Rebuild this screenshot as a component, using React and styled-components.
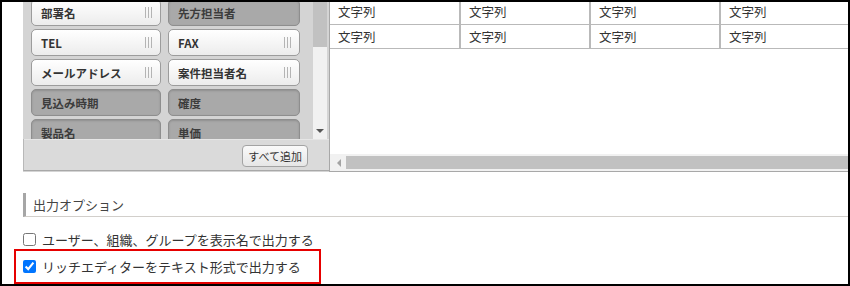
import React from 'react'
import styled, { createGlobalStyle, css } from 'styled-components'

const GlobalStyle = createGlobalStyle`
body {
  margin: 0;
  background: #fff;
  font-family: "Noto Sans CJK JP", "Noto Sans", sans-serif;
  color: #333;
}
`;

const fields = [
  { label: '部署名', on: true },
  { label: '先方担当者', on: false },
  { label: 'TEL', on: true },
  { label: 'FAX', on: true },
  { label: 'メールアドレス', on: true },
  { label: '案件担当者名', on: true },
  { label: '見込み時期', on: false },
  { label: '確度', on: false },
  { label: '製品名', on: false },
  { label: '単価', on: false },
];

const rows = [
  ['文字列', '文字列', '文字列', '文字列'],
  ['文字列', '文字列', '文字列', '文字列'],
];

export default function App() {
  return (
    <>
      <GlobalStyle />
      <Frame>
        <Top>
          <LeftPanel>
            <ListArea>
              <FieldGrid>
                {fields.map((f) => (
                  <Field key={f.label} $on={f.on}>
                    <span>{f.label}</span>
                    {f.on && <Grip />}
                  </Field>
                ))}
              </FieldGrid>
              <VScroll>
                <VThumb />
                <DownArrow />
              </VScroll>
            </ListArea>
            <Footer>
              <AddAll>すべて追加</AddAll>
            </Footer>
          </LeftPanel>
          <RightPanel>
            <TableWrap>
              <Table>
                <tbody>
                  {rows.map((r, i) => (
                    <tr key={i}>
                      {r.map((c, j) => (
                        <Cell key={j}>{c}</Cell>
                      ))}
                    </tr>
                  ))}
                </tbody>
              </Table>
            </TableWrap>
            <HScroll>
              <LeftArrow />
              <HThumb />
            </HScroll>
          </RightPanel>
        </Top>
        <SectionHead>出力オプション</SectionHead>
        <Option>
          <Check type="checkbox" />
          <span>ユーザー、組織、グループを表示名で出力する</span>
        </Option>
        <Highlight>
          <Option $inside>
            <Check type="checkbox" defaultChecked />
            <span>リッチエディターをテキスト形式で出力する</span>
          </Option>
        </Highlight>
      </Frame>
    </>
  )
}

const Frame = styled.div`
box-sizing: border-box;
width: 850px;
height: 286px;
border: 2px solid #000;
overflow: hidden;
`;

const Top = styled.div`
display: flex;
height: 170px;
padding-left: 21px;
`;

const LeftPanel = styled.div`
width: 306px;
display: flex;
flex-direction: column;
background: #d4d4d4;
`;

const ListArea = styled.div`
height: 137px;
display: flex;
overflow: hidden;
padding-left: 8px;
`;

const FieldGrid = styled.div`
display: grid;
grid-template-columns: 130px 132px;
grid-auto-rows: 27px;
column-gap: 7px;
row-gap: 3px;
margin-top: -3px;
`;

const Field = styled.div`
box-sizing: border-box;
display: flex;
align-items: center;
justify-content: space-between;
padding: 0 8px 0 9px;
border-radius: 5px;
font-size: 11.5px;
font-weight: bold;
${(p) => p.$on ? css`
  background: linear-gradient(#ffffff, #ececec);
  border: 1px solid #9c9c9c;
  color: #333;
` : css`
  background: #a9a9a9;
  border: 1px solid #8e8e8e;
  box-shadow: inset 0 1px 2px rgba(0, 0, 0, 0.15);
  color: #3c3c3c;
`}
`;

const Grip = styled.i`
width: 7px;
height: 11px;
background: repeating-linear-gradient(90deg, #b4b4b4 0 1px, transparent 1px 3px);
`;

const VScroll = styled.div`
width: 14px;
margin-left: 13px;
background: #f1f1f1;
display: flex;
flex-direction: column;
justify-content: space-between;
align-items: center;
padding-bottom: 6px;
`;

const VThumb = styled.div`
width: 14px;
height: 45px;
background: #c1c1c1;
`;

const DownArrow = styled.div`
width: 0;
height: 0;
border-left: 4px solid transparent;
border-right: 4px solid transparent;
border-top: 4px solid #555;
`;

const Footer = styled.div`
height: 32px;
box-sizing: border-box;
display: flex;
justify-content: flex-end;
align-items: flex-start;
padding: 6px 21px 0 0;
background: #dadada;
border-left: 1px solid #b8b8b8;
border-bottom: 1px solid #a8a8a8;
box-shadow: inset 0 1px 0 #e6e6e6;
`;

const AddAll = styled.div`
box-sizing: border-box;
height: 22px;
padding: 0 5px;
display: flex;
align-items: center;
font-size: 11px;
color: #333;
background: linear-gradient(#fafafa, #e6e6e6);
border: 1px solid #a3a3a3;
border-radius: 4px;
`;

const RightPanel = styled.div`
flex: 1;
display: flex;
flex-direction: column;
border-left: 1px solid #a8a8a8;
border-bottom: 1px solid #a8a8a8;
overflow: hidden;
`;

const TableWrap = styled.div`
flex: 1;
overflow: hidden;
`;

const Table = styled.table`
border-collapse: collapse;
margin-top: -2px;
`;

const Cell = styled.td`
box-sizing: border-box;
width: 130px;
min-width: 130px;
height: 24px;
padding: 0 0 0 8px;
font-size: 12.5px;
color: #333;
border-right: 2px solid #b9b9b9;
border-bottom: 1px solid #b9b9b9;
vertical-align: middle;
`;

const HScroll = styled.div`
height: 17px;
box-sizing: border-box;
display: flex;
align-items: center;
gap: 5px;
padding: 2px 0 2px 7px;
background: #f1f1f1;
`;

const LeftArrow = styled.div`
width: 0;
height: 0;
border-top: 4px solid transparent;
border-bottom: 4px solid transparent;
border-right: 4px solid #a3a3a3;
`;

const HThumb = styled.div`
flex: 1;
height: 13px;
background: #c1c1c1;
`;

const SectionHead = styled.div`
margin: 21px 0 0 21px;
height: 23px;
display: flex;
align-items: center;
padding-left: 7px;
border-left: 3px solid #a6a6a6;
border-bottom: 1px solid #d2cfcb;
font-size: 13px;
color: #444;
`;

const Option = styled.label`
display: flex;
align-items: center;
gap: 6px;
height: 20px;
margin: ${(p) => (p.$inside ? '0' : '12px 0 0 21px')};
font-size: 13px;
color: #333;
`;

const Check = styled.input`
width: 13px;
height: 13px;
margin: 1px 0 0 0;
`;

const Highlight = styled.div`
box-sizing: border-box;
width: 307px;
height: 35px;
margin-left: 12px;
padding: 5px 0 0 7px;
border: 2px solid #e60000;
`;
